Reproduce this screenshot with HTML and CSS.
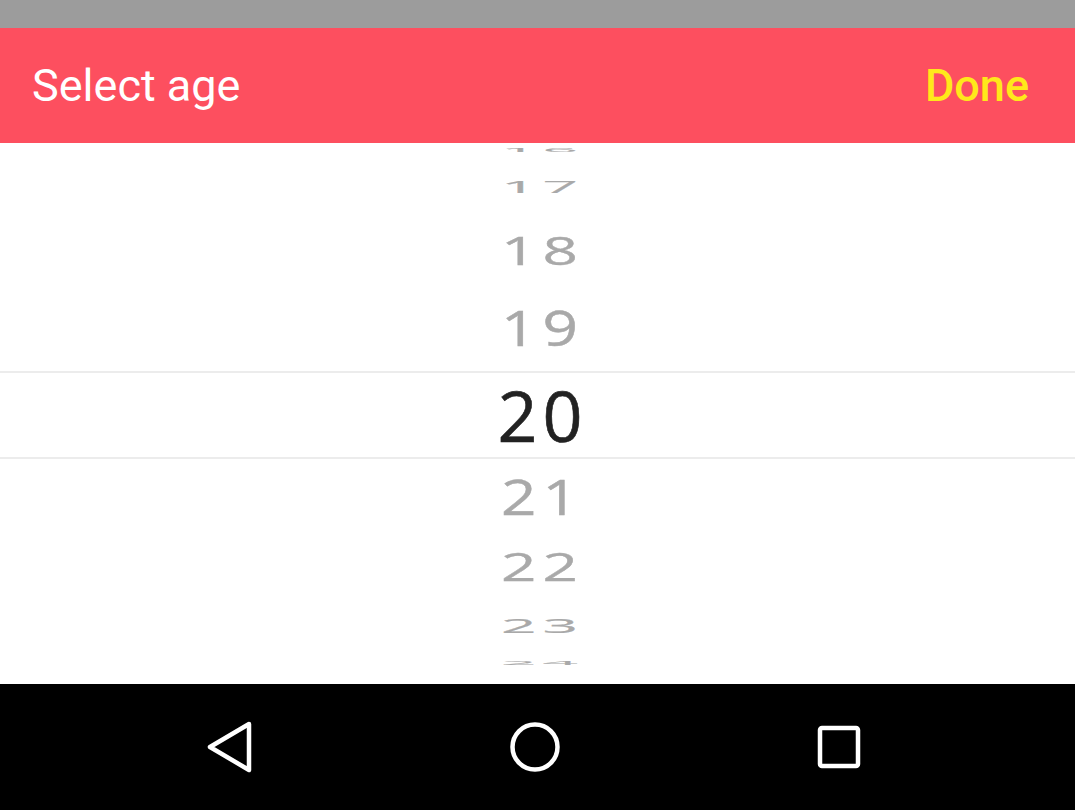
FILE: index.html
```html
<!DOCTYPE html>
<html>
<head>
<meta charset="utf-8">
<link rel="stylesheet" href="styles.css">
</head>
<body>
<div class="screen">
  <div class="status"></div>
  <header class="bar">
    <span class="title">Select age</span>
    <span class="done">Done</span>
  </header>
  <main class="picker">
    <div class="row r16"><span class="num s16">16</span></div>
    <div class="row r17"><span class="num s17">17</span></div>
    <div class="row r18"><span class="num s18">18</span></div>
    <div class="row r19"><span class="num s19">19</span></div>
    <div class="row r20 selected"><span class="num cur">20</span></div>
    <div class="row r21"><span class="num s21">21</span></div>
    <div class="row r22"><span class="num s22">22</span></div>
    <div class="row r23"><span class="num s23">23</span></div>
    <div class="row r24"><span class="num s24">24</span></div>
  </main>
  <nav class="nav">
    <svg class="ico back" width="48" height="52" viewBox="0 0 48 52"><path d="M43 3 L4 26 L43 49 Z" fill="none" stroke="#fff" stroke-width="4.5" stroke-linejoin="round"/></svg>
    <svg class="ico home" width="52" height="52" viewBox="0 0 52 52"><circle cx="26" cy="26" r="22.5" fill="none" stroke="#fff" stroke-width="4.5"/></svg>
    <svg class="ico recent" width="46" height="46" viewBox="0 0 46 46"><rect x="4" y="4" width="38" height="38" rx="2" fill="none" stroke="#fff" stroke-width="4.5"/></svg>
  </nav>
</div>
</body>
</html>
```

FILE: styles.css
```css
html, body {
  margin: 0;
  padding: 0;
  background: #fff;
}
.screen {
  width: 1075px;
  height: 810px;
  display: flex;
  flex-direction: column;
  overflow: hidden;
}
.status {
  height: 28px;
  background: #9c9c9c;
  flex: none;
}
.bar {
  height: 115px;
  flex: none;
  background: #fd4f5f;
  display: flex;
  align-items: center;
  justify-content: space-between;
  padding: 0 46px 0 32px;
  font-family: Roboto, "Liberation Sans", sans-serif;
  font-size: 45px;
}
.title {
  color: #fff;
  font-weight: 400;
}
.done {
  color: #ffe81a;
  font-weight: 500;
}
.picker {
  height: 541px;
  flex: none;
  display: flex;
  flex-direction: column;
  font-family: "Open Sans", "DejaVu Sans", sans-serif;
  overflow: hidden;
}
.row {
  display: flex;
  align-items: center;
  justify-content: center;
  flex: none;
  overflow: visible;
  padding-left: 10px;
}
.r16 { height: 14px; }
.r17 { height: 60px; }
.r18 { height: 66px; }
.r19 { height: 88px; }
.r20 {
  height: 84px;
  border-top: 2px solid #ececec;
  border-bottom: 2px solid #ececec;
}
.r21 { height: 74px; }
.r22 { height: 66px; }
.r23 { height: 52px; }
.r24 { height: 24px; }
.num {
  display: inline-block;
  line-height: 1;
  font-size: 62px;
  color: #a9a9a9;
  letter-spacing: 6px;
  -webkit-text-stroke: 0.6px #a9a9a9;
}
.cur {
  font-size: 70px;
  color: #222;
  letter-spacing: 5px;
  -webkit-text-stroke: 0.6px #222;
}
.s16 { transform: scaleY(0.1); }
.s17 { transform: scaleY(0.26); }
.s18 { transform: scaleY(0.62); }
.s19 { transform: scaleY(0.8); }
.s21 { transform: scaleY(0.8); }
.s22 { transform: scaleY(0.62); }
.s23 { transform: scaleY(0.32); }
.s24 { transform: scaleY(0.1); }
.nav {
  height: 126px;
  flex: none;
  background: #000;
  display: flex;
  align-items: center;
  justify-content: space-between;
  padding: 0 213px 0 206px;
}
.ico { display: block; }
```
